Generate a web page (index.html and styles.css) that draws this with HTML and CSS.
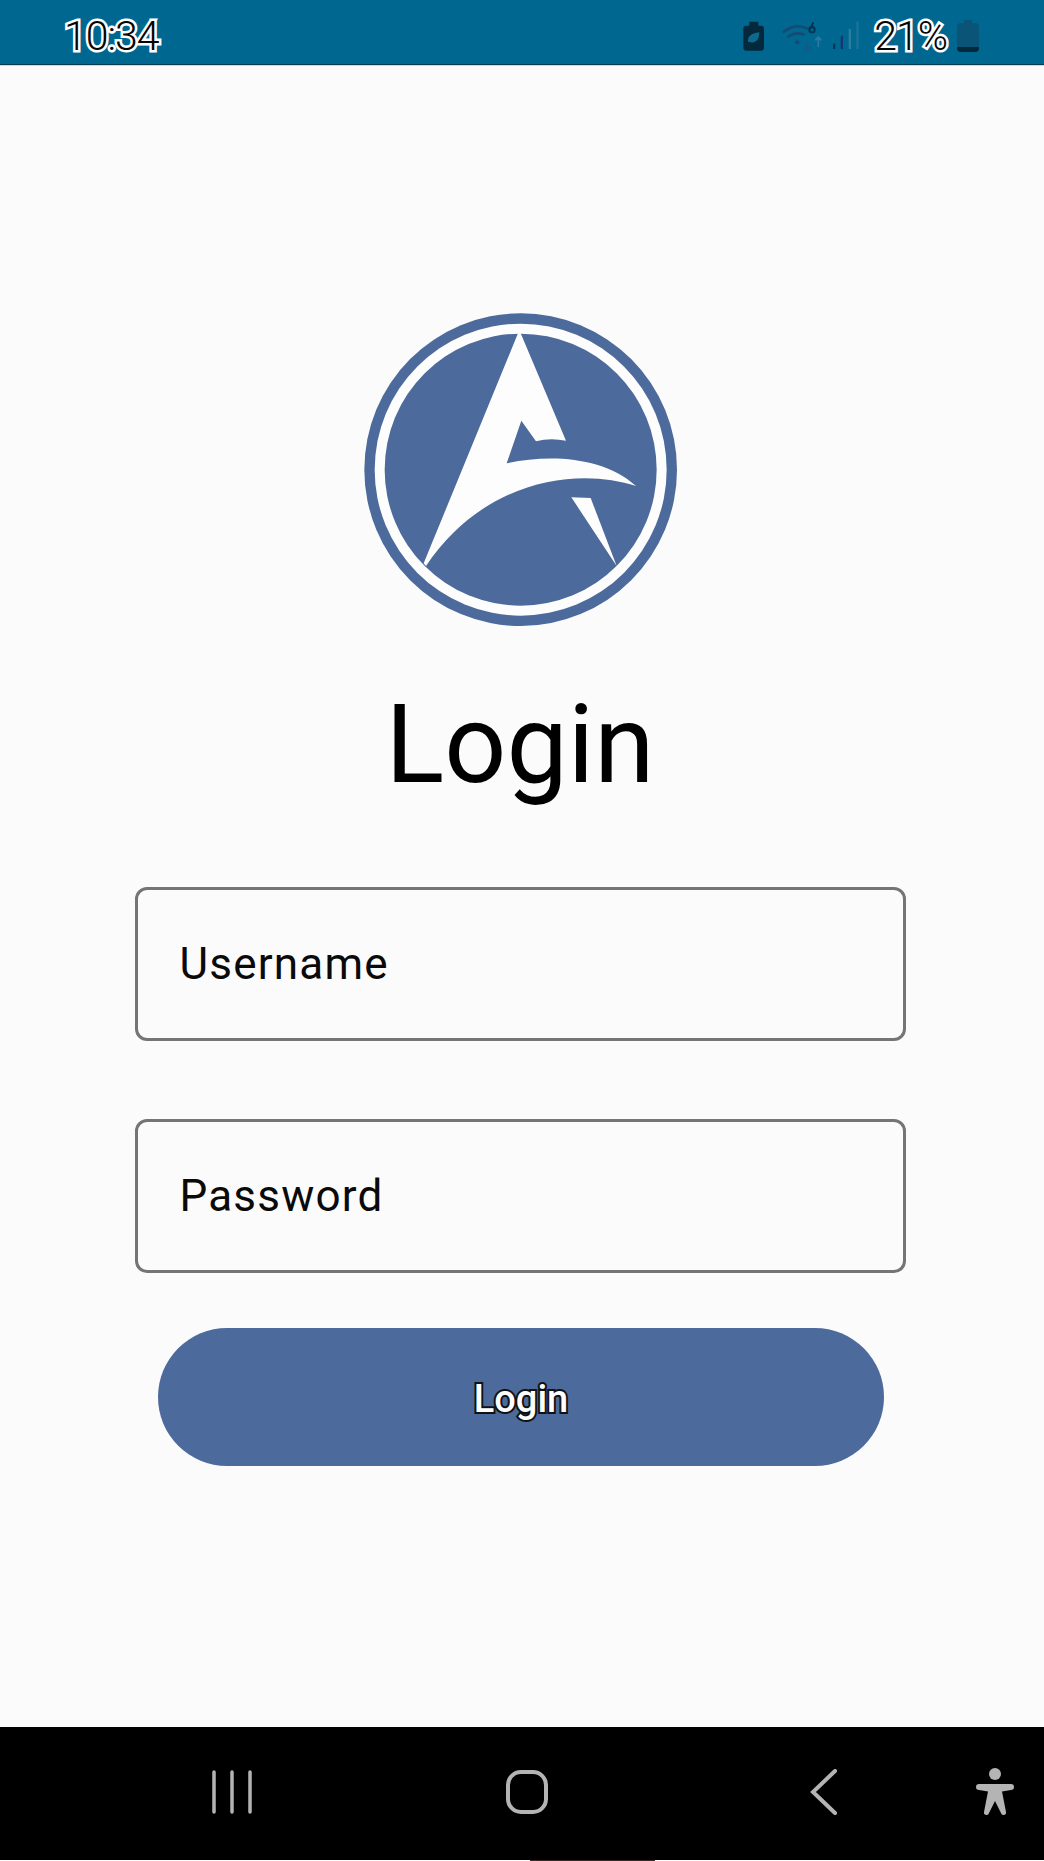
FILE: index.html
```html
<!DOCTYPE html>
<html lang="en">
<head>
    <meta charset="UTF-8">
    <meta name="viewport" content="width=device-width, initial-scale=1.0">
    <title>Login</title>
    <link rel="stylesheet" href="styles.css">
</head>
<body>
    <div class="status">
        <span class="outlined time">10:34</span>
        <div class="status-right">
            <svg class="icons" width="146" height="34" viewBox="0 60 438 102">
                <!-- battery saver -->
                <path d="M88 80V68h27v12h8q9 0 9 9v57q0 9-9 9H79q-9 0-9-9V89q0-9 9-9z" fill="#04283c"/>
                <path d="M84 122q4-20 34-22q0 26-16 30q-8 2-12-2q-3 2-6 0q0-4 0-6z" fill="#0d6a8e"/>
                <!-- wifi -->
                <g fill="none" stroke="#164a74" stroke-width="8">
                    <path d="M188 100q40-30 76-10"/>
                    <path d="M202 114q28-18 52-6"/>
                </g>
                <circle cx="232" cy="130" r="6" fill="#164a74"/>
                <circle cx="276" cy="92" r="8" fill="none" stroke="#04344f" stroke-width="6"/>
                <path d="M280 70l-9 20" stroke="#04344f" stroke-width="6"/>
                <path d="M262 128v26m-9-10l9 10 9-10" fill="none" stroke="#1f5484" stroke-width="5"/>
                <path d="M295 144v-30m-9 10l9-10 9 10" fill="none" stroke="#2a7aa0" stroke-width="5"/>
                <!-- signal -->
                <rect x="339" y="134" width="7" height="16" fill="#06365a"/>
                <rect x="362" y="110" width="7" height="40" fill="#15357a"/>
                <rect x="386" y="90" width="7" height="60" fill="#2a7ea0"/>
                <rect x="409" y="68" width="7" height="82" fill="#1a7398"/>
            </svg>
            <span class="outlined percent">21%</span>
            <svg class="battery" width="22" height="32" viewBox="0 0 22 32">
                <path d="M7 3V0h8v3h3q4 0 4 4v21q0 4-4 4H4q-4 0-4-4V7q0-4 4-4z" fill="#0a5478"/>
                <path d="M0 27h22v1q0 4-4 4H4q-4 0-4-4z" fill="#04283c"/>
            </svg>
        </div>
    </div>

    <div class="main">
        <svg class="logo" width="340" height="340" viewBox="0 0 1020 1020">
            <circle cx="512" cy="509" r="469" fill="#4c6a9b"/>
            <circle cx="512" cy="509" r="438" fill="#fdfdfd"/>
            <circle cx="512" cy="509" r="408" fill="#4c6a9b"/>
            <path d="M512 100L648 422Q600 412 558 424L514 362L470 490C600 462 760 470 858 558C680 500 400 540 228 798L221 790L504 100z" fill="#fdfdfd"/>
            <path d="M664 592L722 594L800 798z" fill="#fdfdfd"/>
        </svg>
        <h1 class="title">Login</h1>
        <div class="field">Username</div>
        <div class="field field-pass">Password</div>
        <button class="login-btn"><span class="btn-text">Login</span></button>
    </div>

    <div class="nav">
        <svg class="nav-menu" width="40" height="44" viewBox="0 0 40 44">
            <path d="M2 2v40M20 2v40M38 2v40" fill="none" stroke="#b4b4b4" stroke-width="3.5" stroke-linecap="round"/>
        </svg>
        <svg class="nav-home" width="44" height="44" viewBox="0 0 44 44">
            <rect x="3" y="2" width="38" height="40" rx="13" fill="none" stroke="#b4b4b4" stroke-width="4"/>
        </svg>
        <svg class="nav-back" width="28" height="46" viewBox="0 0 28 46">
            <path d="M25 2L3 23l22 21" fill="none" stroke="#b4b4b4" stroke-width="4" stroke-linecap="round"/>
        </svg>
        <svg class="nav-person" width="38" height="48" viewBox="0 0 38 48">
            <circle cx="19" cy="6" r="6" fill="#b4b4b4"/>
            <path d="M3 16H35a3 3 0 0 1 0 6L26 23.5L30 44a2.5 2.5 0 0 1-5 1L19 33L13 45a2.5 2.5 0 0 1-5-1L12 23.5L3 22a3 3 0 0 1 0-6z" fill="#b4b4b4"/>
        </svg>
    </div>
    <div class="sliver"></div>
</body>
</html>
```

FILE: styles.css
```css
*{
    box-sizing: border-box;
}

body{
    margin: 0;
    width: 1044px;
    height: 1861px;
    display: flex;
    flex-direction: column;
    background-color: #fbfbfb;
    font-family: Roboto, "Liberation Sans", sans-serif;
    overflow: hidden;
}

/* status bar */
.status{
    height: 65px;
    flex: none;
    display: flex;
    align-items: center;
    justify-content: space-between;
    padding: 7px 65px 0 64px;
    background-color: #006890;
    border-bottom: 1px solid #0a3a50;
}

.outlined{
    font-size: 41px;
    font-weight: 300;
    letter-spacing: -1px;
    color: #050505;
    -webkit-text-stroke: 5px #fff;
    paint-order: stroke fill;
}

.status-right{
    display: flex;
    align-items: center;
}

.percent{
    margin-left: 8px;
}

.battery{
    margin-left: 10px;
}

/* login form */
.main{
    flex: 1;
    display: flex;
    flex-direction: column;
    align-items: center;
    padding-top: 234px;
    padding-right: 4px;
    border-top: 1px solid #b5e4f0;
}

.title{
    margin: 40px 0 0;
    font-size: 109px;
    line-height: 130px;
    font-weight: 400;
    color: #000;
}

.field{
    width: 771px;
    height: 154px;
    margin-top: 77px;
    padding-left: 42px;
    display: flex;
    align-items: center;
    border: 3px solid #757575;
    border-radius: 12px;
    font-size: 44px;
    letter-spacing: 1.2px;
    color: #0a0a0a;
}

.field-pass{
    margin-top: 78px;
}

.login-btn{
    width: 726px;
    height: 138px;
    margin-top: 55px;
    margin-left: 2px;
    padding-top: 5px;
    border: none;
    border-radius: 69px;
    background-color: #4c6a9b;
    font-family: inherit;
}

.btn-text{
    font-size: 38px;
    font-weight: 500;
    color: #fff;
    -webkit-text-stroke: 4px #111;
    paint-order: stroke fill;
}

/* bottom navigation */
.nav{
    height: 133px;
    flex: none;
    display: flex;
    align-items: center;
    padding-left: 212px;
    padding-bottom: 4px;
    background-color: #000;
}

.nav-home{
    margin-left: 253px;
}

.nav-back{
    margin-left: 261px;
}

.nav-person{
    margin-left: 138px;
}

.sliver{
    width: 125px;
    height: 1px;
    flex: none;
    margin-left: 530px;
    background-color: #3a2a28;
}
```
